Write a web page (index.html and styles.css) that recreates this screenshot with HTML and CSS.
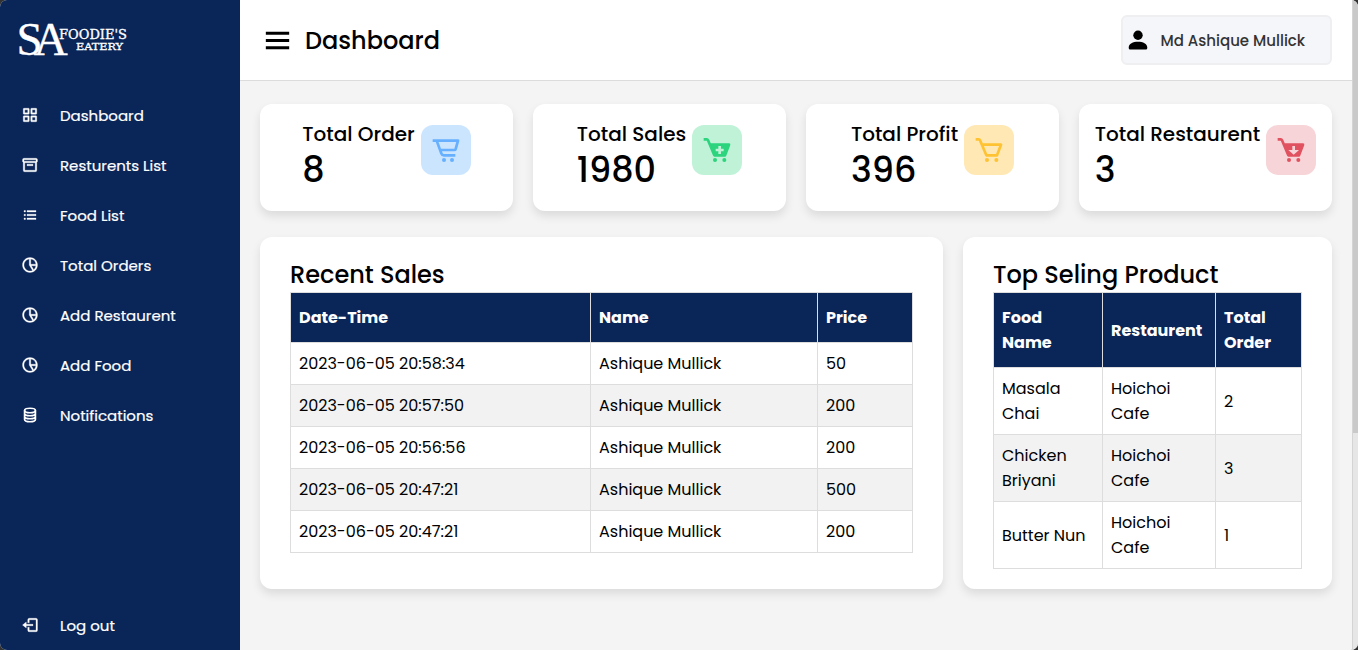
FILE: index.html
```
<!DOCTYPE html>
<html lang="en">
<head>
<meta charset="utf-8">
<title>Dashboard</title>
<link rel="stylesheet" href="styles.css">
</head>
<body>
<div class="window">
  <aside class="sidebar">
    <div class="brand">
      <svg class="logo" width="240" height="90" viewBox="0 0 240 90">
        <text class="logo-mark" x="16.500" y="55" dx="0 -9">SA</text>
        <text class="logo-word" x="59" y="38.500" font-size="12" textLength="68" lengthAdjust="spacingAndGlyphs">FOODIE'S</text>
        <text class="logo-word" x="76" y="50" font-size="9" textLength="47" lengthAdjust="spacingAndGlyphs">EATERY</text>
      </svg>
    </div>
    <nav class="nav">
      <a class="nav-item"><svg class="nav-icon" viewBox="0 0 24 24"><path d="M10 3H4a1 1 0 0 0-1 1v6a1 1 0 0 0 1 1h6a1 1 0 0 0 1-1V4a1 1 0 0 0-1-1zM9 9H5V5h4zm11-6h-6a1 1 0 0 0-1 1v6a1 1 0 0 0 1 1h6a1 1 0 0 0 1-1V4a1 1 0 0 0-1-1zm-1 6h-4V5h4zm-9 4H4a1 1 0 0 0-1 1v6a1 1 0 0 0 1 1h6a1 1 0 0 0 1-1v-6a1 1 0 0 0-1-1zm-1 6H5v-4h4zm11-6h-6a1 1 0 0 0-1 1v6a1 1 0 0 0 1 1h6a1 1 0 0 0 1-1v-6a1 1 0 0 0-1-1zm-1 6h-4v-4h4z"/></svg>Dashboard</a>
      <a class="nav-item"><svg class="nav-icon" viewBox="0 0 24 24"><path d="M20 3H4a2 2 0 0 0-2 2v2c0 .7.4 1.400 1 1.700V19a2 2 0 0 0 2 2h14a2 2 0 0 0 2-2V8.700c.6-.3 1-1 1-1.700V5a2 2 0 0 0-2-2zM4 5h16v2H4zm15 14H5V9h14zM8 11h8v2H8z"/></svg>Resturents List</a>
      <a class="nav-item"><svg class="nav-icon" viewBox="0 0 24 24"><path d="M4 6h2v2H4zm0 5h2v2H4zm0 5h2v2H4zM8 6h12v2H8zm0 5h12v2H8zm0 5h12v2H8z"/></svg>Food List</a>
      <a class="nav-item"><svg class="nav-icon" viewBox="0 0 24 24"><path d="M12 2C6.486 2 2 6.486 2 12s4.486 10 10 10 10-4.486 10-10S17.514 2 12 2zm7.931 9H13V4.069A8.008 8.008 0 0 1 19.931 11zM4 12c0-4.072 3.061-7.436 7-7.931V12a.996.996 0 0 0 .111.438l4.243 6.816A7.949 7.949 0 0 1 12 20c-4.411 0-8-3.589-8-8zm13.052 6.196L13.805 13h6.126a7.992 7.992 0 0 1-2.879 5.196z"/></svg>Total Orders</a>
      <a class="nav-item"><svg class="nav-icon" viewBox="0 0 24 24"><path d="M12 2C6.486 2 2 6.486 2 12s4.486 10 10 10 10-4.486 10-10S17.514 2 12 2zm7.931 9H13V4.069A8.008 8.008 0 0 1 19.931 11zM4 12c0-4.072 3.061-7.436 7-7.931V12a.996.996 0 0 0 .111.438l4.243 6.816A7.949 7.949 0 0 1 12 20c-4.411 0-8-3.589-8-8zm13.052 6.196L13.805 13h6.126a7.992 7.992 0 0 1-2.879 5.196z"/></svg>Add Restaurent</a>
      <a class="nav-item"><svg class="nav-icon" viewBox="0 0 24 24"><path d="M12 2C6.486 2 2 6.486 2 12s4.486 10 10 10 10-4.486 10-10S17.514 2 12 2zm7.931 9H13V4.069A8.008 8.008 0 0 1 19.931 11zM4 12c0-4.072 3.061-7.436 7-7.931V12a.996.996 0 0 0 .111.438l4.243 6.816A7.949 7.949 0 0 1 12 20c-4.411 0-8-3.589-8-8zm13.052 6.196L13.805 13h6.126a7.992 7.992 0 0 1-2.879 5.196z"/></svg>Add Food</a>
      <a class="nav-item"><svg class="nav-icon" viewBox="0 0 24 24"><g fill="none" stroke="#fff" stroke-width="2.300"><ellipse cx="12" cy="6" rx="7.200" ry="3"/><path d="M4.800 6v12c0 1.700 3.200 3 7.200 3s7.200-1.300 7.200-3V6M4.800 10c0 1.700 3.200 3 7.200 3s7.200-1.300 7.200-3M4.800 14c0 1.700 3.200 3 7.200 3s7.200-1.300 7.200-3"/></g></svg>Notifications</a>
      <a class="nav-item nav-logout"><svg class="nav-icon" viewBox="0 0 24 24"><path d="M16 13v-2H7V8l-5 4 5 4v-3zM20 3h-9a2 2 0 0 0-2 2v4h2V5h9v14h-9v-4H9v4a2 2 0 0 0 2 2h9a2 2 0 0 0 2-2V5a2 2 0 0 0-2-2z"/></svg>Log out</a>
    </nav>
  </aside>
  <main class="main">
    <header class="topbar">
      <svg class="menu-icon" viewBox="0 0 24 24"><path d="M4 6h16v2H4zm0 5h16v2H4zm0 5h16v2H4z"/></svg>
      <h1 class="page-title">Dashboard</h1>
      <div class="profile">
        <svg class="profile-icon" viewBox="0 0 20 20"><circle cx="10" cy="5.200" r="4.700"/><path d="M.700 17.500C.700 13.500 5 11.700 10 11.700s9.300 1.800 9.300 5.800c0 1.400-.5 2-1.600 2H2.300c-1.100 0-1.600-.6-1.600-2z"/></svg>
        <span>Md Ashique Mullick</span>
      </div>
    </header>
    <section class="content">
      <div class="cards">
        <div class="card"><div class="stat"><div class="stat-label">Total Order</div><div class="stat-value">8</div></div><div class="badge badge-blue"><svg viewBox="0 0 24 24"><path d="M21 4H2v2h2.300l3.280 9a3 3 0 0 0 2.820 2H19v-2h-8.600a1 1 0 0 1-.94-.66L9 13h9.280a2 2 0 0 0 1.920-1.450L22 5.270A1 1 0 0 0 21 4zm-2.750 7h-10L6.430 6h13.240z"/><circle cx="10.500" cy="19.500" r="1.500"/><circle cx="16.500" cy="19.500" r="1.500"/></svg></div></div>
        <div class="card"><div class="stat"><div class="stat-label">Total Sales</div><div class="stat-value">1980</div></div><div class="badge badge-green"><svg viewBox="0 0 24 24"><circle cx="10.500" cy="19.500" r="1.500"/><circle cx="17.500" cy="19.500" r="1.500"/><path d="M21 7H7.334L6.180 4.230A1.995 1.995 0 0 0 4.333 3H2v2h2.334l4.743 11.385c.155.372.52.615.923.615h8c.417 0 .79-.259.937-.648l3-8A1 1 0 0 0 21 7zm-4 6h-2v2h-2v-2h-2v-2h2V9h2v2h2z"/></svg></div></div>
        <div class="card"><div class="stat"><div class="stat-label">Total Profit</div><div class="stat-value">396</div></div><div class="badge badge-yellow"><svg viewBox="0 0 24 24"><path d="M21.822 7.431A1 1 0 0 0 21 7H7.333L6.179 4.230A1.994 1.994 0 0 0 4.333 3H2v2h2.333l4.744 11.385A1 1 0 0 0 10 17h8c.417 0 .79-.259.937-.648l3-8a1 1 0 0 0-.115-.921zM17.307 15h-6.640l-2.500-6h11.390z"/><circle cx="10.500" cy="19.500" r="1.500"/><circle cx="17.500" cy="19.500" r="1.500"/></svg></div></div>
        <div class="card"><div class="stat"><div class="stat-label">Total Restaurent</div><div class="stat-value">3</div></div><div class="badge badge-red"><svg viewBox="0 0 24 24"><circle cx="10.500" cy="19.500" r="1.500"/><circle cx="17.500" cy="19.500" r="1.500"/><path d="M21 7H7.334L6.180 4.230A1.995 1.995 0 0 0 4.333 3H2v2h2.334l4.743 11.385c.155.372.52.615.923.615h8c.417 0 .79-.259.937-.648l3-8A1 1 0 0 0 21 7zm-7 8.500-4-3.500h3V9h2v3h3z"/></svg></div></div>
      </div>
      <div class="panels">
        <div class="panel panel-sales">
          <h2 class="panel-title">Recent Sales</h2>
          <table class="table">
            <colgroup><col class="c-date"><col class="c-name"><col></colgroup>
            <thead><tr><th>Date-Time</th><th>Name</th><th>Price</th></tr></thead>
            <tbody>
              <tr><td>2023-06-05 20:58:34</td><td>Ashique Mullick</td><td>50</td></tr>
              <tr><td>2023-06-05 20:57:50</td><td>Ashique Mullick</td><td>200</td></tr>
              <tr><td>2023-06-05 20:56:56</td><td>Ashique Mullick</td><td>200</td></tr>
              <tr><td>2023-06-05 20:47:21</td><td>Ashique Mullick</td><td>500</td></tr>
              <tr><td>2023-06-05 20:47:21</td><td>Ashique Mullick</td><td>200</td></tr>
            </tbody>
          </table>
        </div>
        <div class="panel panel-top">
          <h2 class="panel-title">Top Seling Product</h2>
          <table class="table">
            <colgroup><col class="c-food"><col class="c-rest"><col></colgroup>
            <thead><tr><th>Food<br>Name</th><th>Restaurent</th><th>Total<br>Order</th></tr></thead>
            <tbody>
              <tr><td>Masala<br>Chai</td><td>Hoichoi<br>Cafe</td><td>2</td></tr>
              <tr><td>Chicken<br>Briyani</td><td>Hoichoi<br>Cafe</td><td>3</td></tr>
              <tr><td>Butter Nun</td><td>Hoichoi<br>Cafe</td><td>1</td></tr>
            </tbody>
          </table>
        </div>
      </div>
    </section>
  </main>
  <div class="scrollbar"><div class="scrollbar-thumb"></div></div>
</div>
</body>
</html>
```
FILE: styles.css
```
* { box-sizing: border-box; margin: 0; padding: 0; }
html { background: #333; }
body { font-family: Poppins, Inter, "Liberation Sans", sans-serif; color: #000; overflow: hidden; }
.window { display: flex; width: 1358px; height: 650px; border-radius: 7px; overflow: hidden; background: #f4f4f4; }

.sidebar { display: flex; flex-direction: column; width: 240px; background: #0a2558; }
.brand { height: 90px; }
.logo { display: block; fill: #fff; }
.logo-mark { font-family: "Liberation Serif", serif; font-size: 47px; stroke: #fff; stroke-width: .4px; }
.logo-word { font-family: "DejaVu Serif", serif; stroke: #fff; stroke-width: .3px; }
.nav { display: flex; flex-direction: column; flex: 1; }
.nav-item { display: flex; align-items: center; height: 50px; color: #fff; font-size: 15px; -webkit-text-stroke: .2px #fff; }
.nav-logout { margin-top: auto; }
.nav-icon { width: 18px; height: 18px; margin: 0 21px; fill: #fff; stroke: #fff; stroke-width: .4px; }

.main { flex: 1; display: flex; flex-direction: column; }
.topbar { display: flex; align-items: center; height: 81px; padding: 0 20px; background: #fff; border-bottom: 1px solid #dcdcdc; }
.menu-icon { width: 35px; height: 35px; margin-right: 10px; }
.page-title { font-size: 24px; font-weight: 500; }
.profile { display: flex; align-items: center; width: 211px; height: 50px; margin-left: auto; padding-left: 4.5px; border: 2px solid #efeef1; border-radius: 6px; background: #f5f6fa; font-size: 15px; font-weight: 500; color: #333; }
.profile-icon { width: 20px; height: 20px; margin-right: 13px; fill: #000; }

.content { padding: 23px 20px 0; }
.cards { display: grid; grid-template-columns: repeat(4, 1fr); gap: 20px; margin-bottom: 26px; }
.card { display: flex; justify-content: center; height: 107px; padding-top: 15px; border-radius: 12px; background: #fff; box-shadow: 0 5px 10px rgba(0, 0, 0, .1); }
.stat { margin-right: 6px; }
.stat-label { font-size: 20px; font-weight: 500; line-height: 30px; }
.stat-value { font-size: 35px; font-weight: 500; line-height: 42px; }
.badge { display: flex; align-items: center; justify-content: center; width: 50px; height: 50px; margin-top: 6px; border-radius: 12px; }
.badge svg { width: 32px; height: 32px; fill: currentColor; }
.badge-blue { background: #cce5ff; color: #66b0ff; }
.badge-green { background: #c0f2d8; color: #2bd47d; }
.badge-yellow { background: #ffe8b3; color: #ffc233; }
.badge-red { background: #f7d4d7; color: #e05260; }

.panels { display: flex; gap: 20px; }
.panel { height: 352px; padding: 20px 30px; border-radius: 12px; background: #fff; box-shadow: 0 5px 10px rgba(0, 0, 0, .1); }
.panel-sales { width: 683px; }
.panel-top { width: 369px; }
.panel-title { height: 35px; font-size: 24px; font-weight: 500; line-height: 36px; }
.table { width: 100%; border-collapse: collapse; table-layout: fixed; font-size: 16px; line-height: 25px; }
.table th, .table td { border: 1px solid #ddd; padding: 8px; text-align: left; }
.table th { padding: 12px 8px; background: #0a2558; color: #fff; font-weight: 700; }
.table tbody tr:nth-child(even) { background: #f2f2f2; }
.c-date { width: 300px; }
.c-name { width: 227px; }
.c-food { width: 109px; }
.c-rest { width: 113px; }

.scrollbar { width: 6px; background: #e6e6e6; border-left: 1px solid #d4d4d4; }
.scrollbar-thumb { height: 433px; background: #c9c9c9; }
```
